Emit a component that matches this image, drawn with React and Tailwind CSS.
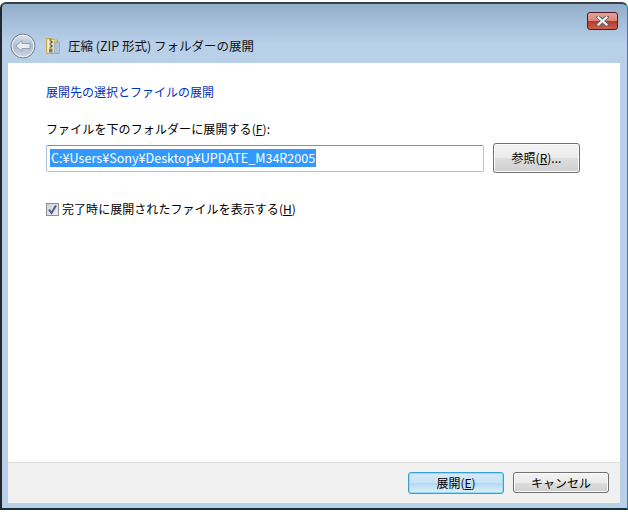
import React from 'react';

const FONT = "font-['Noto_Sans_CJK_JP',sans-serif]";

function BackIcon() {
  return (
    <svg width="26" height="26" viewBox="0 0 26 26">
      <defs>
        <linearGradient id="backFill" x1="0" y1="0" x2="0" y2="1">
          <stop offset="0" stopColor="#dfe6ef" />
          <stop offset="0.5" stopColor="#aebccd" />
          <stop offset="1" stopColor="#c9d5e3" />
        </linearGradient>
      </defs>
      <circle cx="13" cy="13" r="12" fill="url(#backFill)" stroke="#6f7c8c" strokeWidth="1" />
      <circle cx="13" cy="13" r="10.8" fill="none" stroke="#f2f5f9" strokeWidth="1" />
      <path d="M6 13 L12 7.5 V10.5 H20 V15.5 H12 V18.5 Z" fill="#e6ecf3" stroke="#93a1b2" strokeWidth="1" strokeLinejoin="round" />
    </svg>
  );
}

function ZipIcon() {
  return (
    <svg width="14" height="16" viewBox="0 0 14 16">
      <path d="M0.5 0.5 H6.5 V2 H11.5 V15.5 H0.5 Z" fill="#f0d98a" stroke="#c9a550" />
      <rect x="8" y="4" width="5.5" height="11.5" fill="#a9c3dc" stroke="#b89a50" strokeWidth="0.6" />
      <path d="M1.5 2 H7.5 V14.5 H1.5 Z" fill="#fbeeb9" />
      <path d="M3.5 1 h2 v2 h-2 z M3.5 5 h2 v2 h-2 z M3.5 9 h2 v1 h-2 z" fill="#7b7f8a" />
      <path d="M4.5 3 h2 v2 h-2 z M4.5 7 h2 v2 h-2 z" fill="#3f4a63" />
      <rect x="3" y="10.5" width="3.5" height="4" fill="#6f7686" />
    </svg>
  );
}

function CloseButton() {
  return (
    <div className="w-[31px] h-[18px] rounded-[3px] border border-[#4c1a2c] bg-[linear-gradient(#eaa296_0%,#d98475_50%,#b8382a_52%,#c9604f_100%)] flex items-center justify-center">
      <svg width="13" height="10" viewBox="0 0 13 10">
        <path d="M2 1 L6.5 4 L11 1 M2 9 L6.5 6 L11 9 M2 1 L11 9 M11 1 L2 9" fill="none" stroke="#5d6170" strokeWidth="3.4" strokeLinecap="square" />
        <path d="M2.5 1.5 L10.5 8.5 M10.5 1.5 L2.5 8.5" fill="none" stroke="#f3f4f6" strokeWidth="2.2" strokeLinecap="square" />
      </svg>
    </div>
  );
}

function Button({ primary, className, children }) {
  return (
    <div
      className={`flex items-center justify-center text-[12px] text-black rounded-[3px] border ${
        primary
          ? 'border-[#3a9fd0] shadow-[inset_0_0_0_1px_#8fdcf5] bg-[linear-gradient(#d5eaf8_0%,#c5e2f5_50%,#b5d9f0_52%,#dff0fb_100%)]'
          : 'border-[#707070] shadow-[inset_0_0_0_1px_#fbfbfb] bg-[linear-gradient(#f3f3f3_0%,#ebebeb_50%,#dddddd_52%,#cfcfcf_100%)]'
      } ${className}`}
    >
      {children}
    </div>
  );
}

export default function App() {
  return (
    <div className={`w-[628px] h-[514px] bg-white pt-[2px] ${FONT}`}>
      <div className="h-[508px] border-t-2 border-l-2 border-r border-b-2 border-t-[#3a4048] border-l-[#23272c] border-r-[#1c8fb0] border-b-[#14323e] rounded-t-[6px] bg-[linear-gradient(#93aeca_0%,#b9d0e9_40px,#b9d0e9_100%)] flex flex-col overflow-hidden">
        {/* Title bar */}
        <div className="h-[59px] flex flex-col shrink-0">
          <div className="flex justify-end pt-[8px] pr-[9px] h-[29px]">
            <CloseButton />
          </div>
          <div className="flex items-center pl-[8px]">
            <BackIcon />
            <div className="ml-[10px] flex">
              <ZipIcon />
            </div>
            <span className="ml-[8px] text-[12.5px] leading-[20px] text-[#111]">圧縮 (ZIP 形式) フォルダーの展開</span>
          </div>
        </div>

        {/* Content */}
        <div className="mx-[6px] w-[612px] h-[440px] flex flex-col bg-white">
          <div className="flex-1 pl-[38px] pt-[20px] text-[12px] text-black">
            <div className="leading-[18px] text-[#0033bc]">展開先の選択とファイルの展開</div>
            <div className="mt-[19px] leading-[18px] tracking-[0.1px]">
              ファイルを下のフォルダーに展開する(<span className="underline">F</span>):
            </div>
            <div className="mt-[5px] flex items-center">
              <div className="w-[438px] h-[27px] border border-[#abc7dc] border-t-[#6f95b5] rounded-[2px] pl-[3px] flex items-center bg-white">
                <span className="bg-[#3399ff] text-white text-[12.6px] leading-[18px] px-[1px]">C:¥Users¥Sony¥Desktop¥UPDATE_M34R2005</span>
              </div>
              <Button className="ml-[9px] w-[87px] h-[30px]">
                <span>
                  参照(<span className="underline">R</span>)...
                </span>
              </Button>
            </div>
            <div className="mt-[27px] flex items-center">
              <div className="w-[13px] h-[13px] border border-[#8e8f8f] bg-[linear-gradient(135deg,#cfd0d2,#f2f2f3)] flex items-center justify-center">
                <svg width="11" height="11" viewBox="0 0 11 11">
                  <path d="M2 5.5 L4.5 9 L9 1.5" fill="none" stroke="#4a5f97" strokeWidth="2" />
                </svg>
              </div>
              <span className="ml-[3px] leading-[18px] tracking-[0.05px]">
                完了時に展開されたファイルを表示する(<span className="underline">H</span>)
              </span>
            </div>
          </div>

          {/* Footer */}
          <div className="h-[41px] shrink-0 border-t border-[#dfdfdf] bg-[#f0f0f0] flex justify-end items-start pt-[9px] pr-[11px] gap-[9px]">
            <Button primary className="w-[96px] h-[22px]">
              <span>
                展開(<span className="underline">E</span>)
              </span>
            </Button>
            <Button className="w-[96px] h-[21px]">キャンセル</Button>
          </div>
        </div>
      </div>
    </div>
  );
}
